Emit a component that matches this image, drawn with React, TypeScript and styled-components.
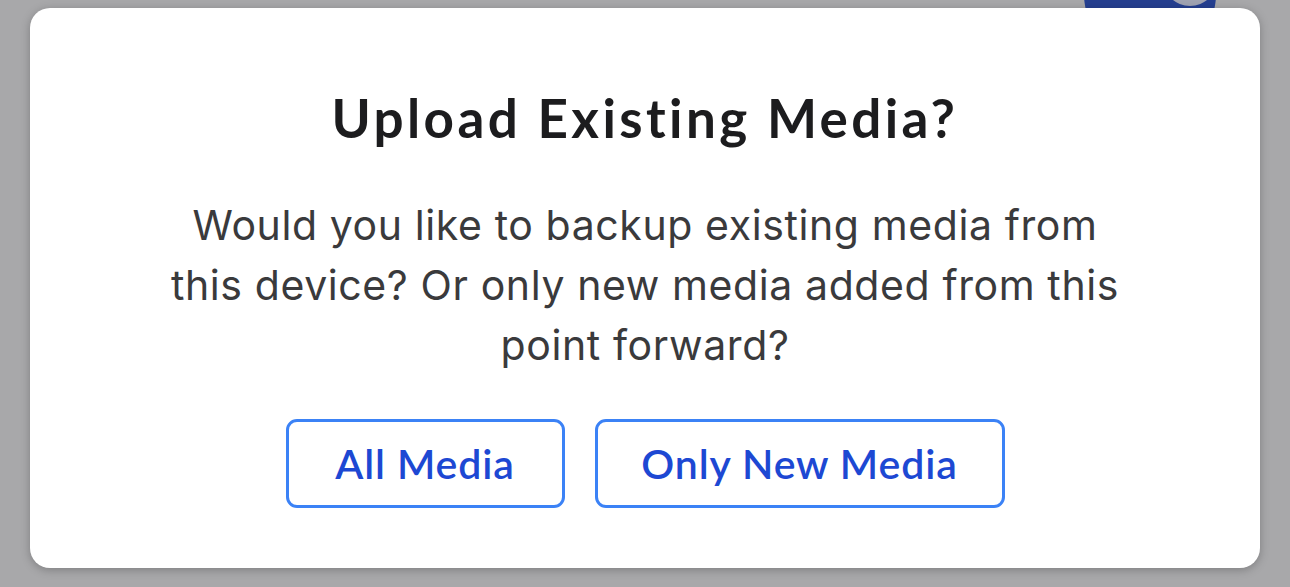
import React from "react";
import styled, { createGlobalStyle } from "styled-components";

const Global = createGlobalStyle`
  html, body { margin: 0; padding: 0; }
  body { background: #a8a8aa; overflow: hidden; }
`;

const Screen = styled.div`
  position: relative;
  width: 1290px;
  height: 587px;
  background: #a8a8aa;
  box-sizing: border-box;
  padding: 8px 30px 0 30px;
  overflow: hidden;
`;

const Backdrop = styled.div`
  position: absolute;
  left: 1084px;
  top: -72px;
  width: 132px;
  height: 132px;
  border-radius: 50%;
  background: #253f90;
`;

const BackdropAvatar = styled.div`
  position: absolute;
  left: 1163px;
  top: -48px;
  width: 54px;
  height: 54px;
  border-radius: 50%;
  background: #a0a3b2;
`;

const Modal = styled.div`
  position: relative;
  width: 1230px;
  height: 560px;
  box-sizing: border-box;
  background: #ffffff;
  border-radius: 20px;
  box-shadow: 0 2px 10px rgba(0, 0, 0, 0.25);
  display: flex;
  flex-direction: column;
  align-items: center;
  padding-top: 80px;
`;

const Title = styled.h1`
  margin: 0;
  font-family: "Lato", "Inter", sans-serif;
  font-weight: 700;
  font-size: 53px;
  line-height: 60px;
  color: #1c1c1e;
  letter-spacing: 3.4px;
`;

const Body = styled.p`
  margin: 47px 0 0 0;
  font-family: "Inter", "Roboto", sans-serif;
  font-weight: 400;
  font-size: 41px;
  line-height: 60px;
  color: #3a3a3c;
  text-align: center;
  letter-spacing: 0.6px;
`;

const Actions = styled.div`
  margin-top: 44px;
  display: flex;
  gap: 30px;
`;

const ActionButton = styled.button<{ $w: number }>`
  width: ${(p) => p.$w}px;
  height: 89px;
  box-sizing: border-box;
  border: 3px solid #3b82f6;
  border-radius: 11px;
  background: #ffffff;
  color: #1d48d3;
  font-family: "Lato", "Inter", sans-serif;
  font-weight: 600;
  font-size: 41px;
  letter-spacing: 0.9px;
  display: flex;
  align-items: center;
  justify-content: center;
  padding: 0;
  cursor: pointer;
`;

export default function App() {
  return (
    <>
      <Global />
      <Screen>
        <Backdrop />
        <BackdropAvatar />
        <Modal>
          <Title>Upload Existing Media?</Title>
          <Body>
            Would you like to backup existing media from
            <br />
            this device? Or only new media added from this
            <br />
            point forward?
          </Body>
          <Actions>
            <ActionButton $w={279}>All Media</ActionButton>
            <ActionButton $w={410}>Only New Media</ActionButton>
          </Actions>
        </Modal>
      </Screen>
    </>
  );
}
